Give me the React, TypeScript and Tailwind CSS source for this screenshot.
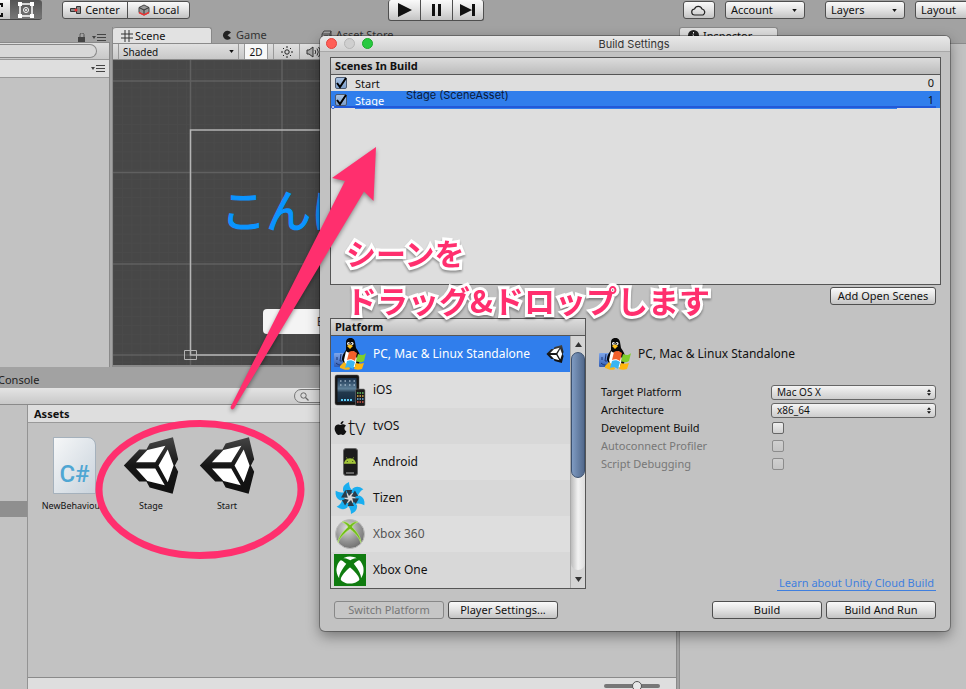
import React from "react";
import { FaAndroid, FaApple, FaXbox } from "react-icons/fa";

const buttonFace =
  "flex items-center rounded-[3px] border border-[#4f4f4f] bg-linear-to-b from-[#fafafa] via-[#e2e2e2] to-[#c4c4c4]";
const button = `${buttonFace} justify-center`;
const dropdown = `${buttonFace} justify-between pr-[7px] pl-[5px]`;
const tabStrip = "flex shrink-0 items-end";

function UnityIcon({ className }: { className: string }) {
  return (
    <svg viewBox="366 230 170 174" className={className} aria-hidden="true">
      <defs>
        <linearGradient id="unity-shade" x1="0" y1="0" x2="0" y2="1">
          <stop offset="0" stopColor="#454545" />
          <stop offset="0.5" stopColor="#161616" />
          <stop offset="1" stopColor="#111" />
        </linearGradient>
      </defs>
      <path
        fill="url(#unity-shade)"
        d="M368 317 415 268H437L447 250 518 231 534 298 524 317 534 336 517 403 447 384 437 366H415Z"
      />
      <path
        fill="#fff"
        d="M405 307 440 270 495 257 464 307ZM405 326H464L493 377 440 364ZM474 317 502 268 520 317 502 368Z"
      />
    </svg>
  );
}

function StandaloneIcon() {
  return (
    <svg viewBox="0 0 32 32" className="size-8 shrink-0" aria-hidden="true">
      <defs>
        <linearGradient id="finder" x1="0" y1="0" x2="0" y2="1">
          <stop offset="0" stopColor="#7fa6ea" />
          <stop offset="1" stopColor="#2f5cb4" />
        </linearGradient>
      </defs>
      <rect x="0" y="15" width="15" height="14" rx="1" fill="url(#finder)" />
      <path d="M3 19v3M11 19v3M7 16l-1 7h2M2 25c3 3 8 3 11 0" stroke="#1b3573" fill="none" />
      <path d="M12 4c0-5 8-6 9 0l1 6c3 4 5 8 4 13l-3 6H12L8 22c0-5 2-7 4-10Z" fill="#080808" />
      <path d="M12 13c2 2 6 2 8 0l3 8-2 8h-9l-2-7Z" fill="#fff" />
      <circle cx="14.500" cy="5.500" r="1.500" fill="#fff" />
      <circle cx="18" cy="5.500" r="1.500" fill="#fff" />
      <circle cx="15" cy="5.700" r=".7" />
      <circle cx="17.600" cy="5.700" r=".7" />
      <path d="M13 8c2-2 4-2 6 0l-3 3Z" fill="#ffc21c" />
      <path d="M6 28l4-4 5 4 1 3c-3 2-7 0-10-1Z" fill="#f6b51a" />
      <path d="M15 14c3-2 5-1 8 1l-2 8c-3-2-5-2-8-1Z" fill="#f2602b" />
      <path d="M24 16c3 1 5 2 8-1l-2 8c-3 2-6 1-8 0Z" fill="#7fce2a" />
      <path d="M13 23c3-1 5-1 8 1l-2 7c-3-2-5-2-8-1Z" fill="#39b5f2" />
      <path d="M22 25c3 1 5 1 8 0l-2 6c-3 1-5 1-8 0Z" fill="#ffb60d" />
    </svg>
  );
}

function IosIcon() {
  return (
    <svg viewBox="0 0 32 32" className="size-8 shrink-0" aria-hidden="true">
      <defs>
        <linearGradient id="wall" x1="0" y1="0" x2="0" y2="1">
          <stop offset="0" stopColor="#16304c" />
          <stop offset="0.45" stopColor="#5f8199" />
          <stop offset="0.6" stopColor="#22394d" />
          <stop offset="1" stopColor="#142b40" />
        </linearGradient>
      </defs>
      <rect x="1" y="1" width="24" height="30" rx="2" fill="#151515" stroke="#555" strokeWidth=".5" />
      <rect x="3.500" y="4" width="19" height="24" fill="url(#wall)" />
      <path d="M6 7h15M6 11h15" stroke="#c9dcea" strokeWidth="1.500" strokeDasharray="1.500 3" opacity=".7" />
      <path d="M7 26h12" stroke="#5ecbf3" strokeWidth="2" strokeDasharray="2 1" />
      <rect x="21.500" y="15" width="9.500" height="17" rx="1.500" fill="#1a1a1a" stroke="#777" strokeWidth=".6" />
      <path d="M23 19h7" stroke="#67c96a" strokeWidth="1.500" strokeDasharray="1.500 1" />
      <path d="M23 22h7" stroke="#e6b44b" strokeWidth="1.500" strokeDasharray="1.500 1" />
      <path d="M23 25h7" stroke="#71b6e8" strokeWidth="1.500" strokeDasharray="1.500 1" />
      <path d="M23 28h7" stroke="#d85c4e" strokeWidth="1.500" strokeDasharray="1.500 1" />
    </svg>
  );
}

function TvIcon() {
  return (
    <span className="flex size-8 shrink-0 items-center" aria-hidden="true">
      <FaApple className="mt-1 h-4 w-[13px] shrink-0" />
      <span className="ml-px font-['Open_Sans'] text-[22px] leading-7 font-light">tv</span>
    </span>
  );
}

function AndroidIcon() {
  return (
    <span className="flex size-8 shrink-0 items-center justify-center" aria-hidden="true">
      <span className="flex h-7 w-[15px] flex-col items-center rounded-[3px] border border-[#666] bg-[#1c1c1c] pt-[6px]">
        <FaAndroid className="size-3 text-[#a4c639]" />
        <span className="mt-[5px] h-[2px] w-2 bg-[#666]" />
      </span>
    </span>
  );
}

function TizenIcon() {
  return (
    <svg viewBox="-16 -16 32 32" className="size-8 shrink-0" aria-hidden="true">
      {[0, 60, 120, 180, 240, 300].map((angle) => (
        <g key={angle} transform={`rotate(${angle})`}>
          <path d="M-7-7Q-8-13-1-16Q-1-11 2-8L-4-4Z" fill="#19aef0" />
          <path d="M-4-8 5-8 2-5-1-2Z" fill="#2c3c49" />
        </g>
      ))}
    </svg>
  );
}

function Xbox360Icon() {
  return (
    <svg viewBox="0 0 32 32" className="size-8 shrink-0" aria-hidden="true">
      <defs>
        <radialGradient id="orb" cx=".4" cy=".3" r=".8">
          <stop offset="0" stopColor="#ddd" />
          <stop offset=".6" stopColor="#8f8f8f" />
          <stop offset="1" stopColor="#666" />
        </radialGradient>
      </defs>
      <circle cx="16" cy="16" r="14.500" fill="url(#orb)" stroke="#bbb" />
      <path d="M8 4c3-1 6 1 8 3 2-2 5-4 8-3-3 1-5 3-6 5 4 4 9 9 9 16-2-6-7-11-11-14C12 14 6 19 4 25c0-7 6-12 10-16-1-2-3-4-6-5Z" fill="#71bd19" stroke="#c5ee8c" strokeWidth=".6" />
    </svg>
  );
}

function XboxOneIcon() {
  return (
    <span className="flex size-8 shrink-0 items-center justify-center bg-[#107c10]" aria-hidden="true">
      <FaXbox className="size-7 text-white" />
    </span>
  );
}

const platforms = [
  { name: "PC, Mac & Linux Standalone", icon: <StandaloneIcon />, style: "bg-[#307eec] text-white" },
  { name: "iOS", icon: <IosIcon />, style: "bg-[#dedede]" },
  { name: "tvOS", icon: <TvIcon />, style: "bg-[#d8d8d8]" },
  { name: "Android", icon: <AndroidIcon />, style: "bg-[#dedede]" },
  { name: "Tizen", icon: <TizenIcon />, style: "bg-[#d8d8d8]" },
  { name: "Xbox 360", icon: <Xbox360Icon />, style: "bg-[#dedede] text-[#555]" },
  { name: "Xbox One", icon: <XboxOneIcon />, style: "bg-[#d8d8d8]" },
];

function MenuIcon() {
  return (
    <svg viewBox="0 0 14 9" className="h-[9px] w-[14px] shrink-0" aria-hidden="true">
      <path d="M0 3h4L2 6Z" fill="#444" />
      <path d="M5 1.500h9M5 4.500h9M5 7.500h9" stroke="#444" />
    </svg>
  );
}

function Caret() {
  return (
    <svg viewBox="0 0 6 4" className="h-[3px] w-[5px] shrink-0" aria-hidden="true">
      <path d="M0 0h6L3 4Z" fill="#111" />
    </svg>
  );
}

function Toolbar() {
  return (
    <header className="flex h-[27px] shrink-0 items-start">
      <button aria-label="Scale" className="flex h-5 w-[10px] items-center border-b border-[#444] bg-linear-to-b from-[#fafafa] to-[#c4c4c4]">
        <svg viewBox="0 0 5 16" className="h-4 w-[5px]" aria-hidden="true">
          <path d="M0 2h2v3M0 14h2v-3" stroke="#111" strokeWidth="2" fill="none" />
        </svg>
      </button>
      <button aria-label="Rect" aria-pressed="true" className="flex h-5 w-8 items-center justify-center rounded-r-[3px] border-b border-[#444] bg-linear-to-b from-[#555] to-[#777]">
        <svg viewBox="0 0 18 18" className="size-[18px]" aria-hidden="true">
          <path d="M3 3h12v12H3Z" fill="none" stroke="#fff" strokeWidth="1.500" />
          <path d="M1 1h4v4H1ZM13 1h4v4h-4ZM1 13h4v4H1ZM13 13h4v4h-4Z" fill="#fff" />
          <circle cx="9" cy="9" r="2.500" fill="none" stroke="#fff" />
          <circle cx="9" cy="9" r="1" fill="#fff" />
        </svg>
      </button>
      <div className="mt-px ml-5 flex h-[18px]">
        <button className={`${button} w-[66px] gap-[3px] rounded-r-none`}>
          <svg viewBox="0 0 12 8" className="h-2 w-3" aria-hidden="true">
            <path d="M.5 2.500h5v3h-5ZM6.500.5h4v7h-4Z" fill="#888" stroke="#333" />
            <circle cx="6" cy="4" r="1.500" fill="#e33" />
          </svg>
          Center
        </button>
        <button className={`${button} -ml-px w-[63px] gap-[3px] rounded-l-none`}>
          <svg viewBox="0 0 12 12" className="size-3" aria-hidden="true">
            <path d="M6 1 11 3.500v5L6 11 1 8.500v-5Z" fill="#999" stroke="#444" />
            <path d="M1 3.500 6 6l5-2.500M6 6v5" fill="none" stroke="#333" />
            <path d="M1 8.500 6 11l5-2.500" fill="none" stroke="#e33" strokeWidth="1.500" />
          </svg>
          Local
        </button>
      </div>
      <div className="ml-[198px] flex h-[21px]">
        <button aria-label="Play" className={`${button} w-[33px] rounded-r-none border-t-0`}>
          <svg viewBox="0 0 14 14" className="size-[14px]" aria-hidden="true">
            <path d="M0 0 14 7 0 14Z" fill="#111" />
          </svg>
        </button>
        <button aria-label="Pause" className={`${button} -ml-px w-[33px] rounded-none border-t-0`}>
          <svg viewBox="0 0 14 14" className="size-[14px]" aria-hidden="true">
            <path d="M2 1h3v12H2ZM8 1h3v12H8Z" fill="#111" />
          </svg>
        </button>
        <button aria-label="Step" className={`${button} -ml-px w-8 rounded-l-none border-t-0`}>
          <svg viewBox="0 0 16 14" className="h-[14px] w-4" aria-hidden="true">
            <path d="M0 1 12 7 0 13ZM12 1h3v12h-3Z" fill="#111" />
          </svg>
        </button>
      </div>
      <div className="mt-px -mr-[29px] ml-auto flex h-[18px]">
        <button aria-label="Cloud" className={`${button} w-8`}>
          <svg viewBox="0 0 16 11" className="h-[11px] w-4" aria-hidden="true">
            <path d="M4 10a3 3 0 0 1-.5-6A4 4 0 0 1 11 4a3.200 3.200 0 0 1 1 6Z" fill="none" stroke="#222" strokeWidth="1.200" />
          </svg>
        </button>
        <button className={`${dropdown} ml-[10px] w-20`}>Account <Caret /></button>
        <button className={`${dropdown} ml-5 w-20`}>Layers <Caret /></button>
        <button className={`${dropdown} ml-[10px] w-20`}>Layout <Caret /></button>
      </div>
    </header>
  );
}

function Hierarchy() {
  return (
    <section className="flex w-[110px] shrink-0 flex-col">
      <div className={`${tabStrip} h-[15px] justify-end gap-[6px] pr-1`}>
        <svg viewBox="0 0 8 9" className="h-[9px] w-2" aria-label="Lock">
          <path d="M0 4h7v5H0Z" fill="#444" />
          <path d="M2 4V2.500a1.800 1.800 0 0 1 4-1V4" fill="none" stroke="#555" />
        </svg>
        <MenuIcon />
      </div>
      <div className="flex min-h-0 flex-1 flex-col border-t border-r border-[#8a8a8a] bg-[#c2c2c2]">
        <div className="flex h-[17px] shrink-0 items-center border-b border-[#999] bg-linear-to-b from-[#dedede] to-[#c8c8c8] pr-3">
          <input aria-label="Search hierarchy" className="h-[14px] w-full rounded-r-full border border-l-0 border-[#888] bg-[#d8d8d8]" />
        </div>
        <div className="flex h-[18px] shrink-0 items-center justify-end border-b border-[#999] bg-[#dedede] pr-1">
          <MenuIcon />
        </div>
      </div>
    </section>
  );
}

function Scene() {
  return (
    <section className="ml-[2px] flex min-w-0 flex-1 flex-col border-l border-[#8a8a8a]">
      <div className={`${tabStrip} h-4 items-stretch`}>
        <div className="flex w-[99px] items-center gap-[2px] rounded-t-[3px] border-t border-r border-[#888] bg-[#e2e2e2] pl-2">
          <svg viewBox="0 0 12 12" className="size-3" aria-hidden="true">
            <path d="M4 0v12M8 0v12M0 4h12M0 8h12" stroke="#333" />
          </svg>
          Scene
        </div>
        <div className="flex items-center gap-1 pl-[10px] text-[#333]">
          <svg viewBox="0 0 10 10" className="size-[10px]" aria-hidden="true">
            <path d="M9 2.500A4.500 4.500 0 1 0 9 8L5.500 5.200Z" fill="#222" />
          </svg>
          Game
        </div>
        <div className="flex items-center gap-1 pl-[54px] text-[#333]">
          <svg viewBox="0 0 11 11" className="size-[11px]" aria-hidden="true">
            <path d="M1 4h8v6H1ZM1 4l2-3h7L9 4M10 1v6L9 10M3 6h4" fill="none" stroke="#444" />
          </svg>
          Asset Store
        </div>
      </div>
      <div className="flex h-[17px] shrink-0 items-stretch border-t border-b border-[#8a8a8a] bg-linear-to-b from-[#e0e0e0] to-[#c8c8c8] pl-[5px] text-[10px]">
        <button className="flex w-[121px] items-center justify-between border-x border-[#999] pr-1 pl-1">
          Shaded <Caret />
        </button>
        <button className="ml-[5px] w-6 border-x border-[#999] bg-[#f8f8f8]">2D</button>
        <button aria-label="Lighting" className="ml-[5px] flex w-[27px] items-center justify-center border-x border-[#999]">
          <svg viewBox="0 0 12 12" className="size-3" aria-hidden="true">
            <circle cx="6" cy="6" r="2.200" fill="none" stroke="#222" />
            <path d="M6 0v2M6 10v2M0 6h2M10 6h2M2 2l1 1M9 9l1 1M10 2 9 3M3 9l-1 1" stroke="#222" />
          </svg>
        </button>
        <button aria-label="Audio" className="flex w-[26px] items-center justify-center">
          <svg viewBox="0 0 14 12" className="h-3 w-[14px]" aria-hidden="true">
            <path d="M1 4h2l4-3v10L3 8H1Z" fill="#aaa" stroke="#333" />
            <path d="M9 4q1.500 2 0 4M11 2.500q2.500 3.500 0 7M12.500 1q3.500 5 0 10" fill="none" stroke="#333" />
          </svg>
        </button>
      </div>
      <div className="relative min-h-0 flex-1 overflow-hidden border-b-2 border-[#8a8a8a] bg-[#474747]">
        <svg className="absolute inset-0 size-full" aria-hidden="true">
          <defs>
            <pattern id="fine-grid" width="9.140" height="9.140" patternUnits="userSpaceOnUse">
              <path d="M0 .5H10M.5 0V10" stroke="#4a4a4a" fill="none" />
            </pattern>
          </defs>
          <rect width="100%" height="100%" fill="url(#fine-grid)" />
          <path d="M77.500 0V400M169 0V400M0 21H600M0 112.500H600M0 204H600M0 295H600" stroke="#606060" strokeWidth="1.500" />
          <path d="M600 70H77.500V295H600" stroke="#b4b4b4" strokeWidth="1.500" fill="none" />
          <path d="M71.500 290.500h12v9h-12Z" stroke="#b4b4b4" fill="none" />
        </svg>
        <p className="absolute top-[116px] left-[108px] font-['Noto_Sans_CJK_JP',sans-serif] text-[45px] leading-[66px] whitespace-nowrap text-[#0a94ff] [-webkit-text-stroke:1px_#0a94ff]">こんにちは</p>
        <button className="absolute top-[249px] left-[150px] h-[25px] w-[146px] rounded-[4px] bg-[#f4f4f4] text-[12px] text-[#333]">Button</button>
      </div>
    </section>
  );
}

function Project() {
  return (
    <section className="flex min-h-0 flex-[322] flex-col">
      <div className="flex h-[21px] shrink-0 items-end">
        <span className="-ml-[2px] text-[#222]">Console</span>
      </div>
      <div className="flex h-[17px] shrink-0 items-center border-b border-[#8a8a8a] bg-linear-to-b from-[#e4e4e4] to-[#c8c8c8] pl-[294px]">
        <label className="flex h-[14px] w-[300px] items-center rounded-full border border-[#777] bg-[#d8d8d8] pl-[5px]">
          <svg viewBox="0 0 9 9" className="size-[9px]" aria-hidden="true">
            <circle cx="3.500" cy="3.500" r="2.700" fill="none" stroke="#666" />
            <path d="m5.500 5.500 3 3" stroke="#666" strokeWidth="1.300" />
          </svg>
          <input aria-label="Search assets" className="min-w-0 flex-1 text-[10px]" />
        </label>
      </div>
      <div className="flex min-h-0 flex-1 border-r border-[#8a8a8a] bg-[#c2c2c2]">
        <div className="w-7 shrink-0 border-r border-[#939393] pt-24">
          <div className="h-4 bg-[#8f8f8f]" />
        </div>
        <div className="flex min-w-0 flex-1 flex-col">
          <h2 className="flex h-[18px] shrink-0 items-center border-b border-[#999] bg-[#dedede] pt-px pl-[6px] font-bold">Assets</h2>
          <div className="flex flex-1 items-start pt-[14px] pl-2 text-[10px]">
            <figure className="flex w-[77px] flex-col items-center">
              <div className="flex h-[57px] w-[43px] items-end justify-center rounded-tr-lg border border-[#a5b1bc] bg-linear-to-br from-[#f6f7f8] to-[#c9d3dc] pb-[3px] text-[#4fa6d3]">
                <span className="font-['Roboto'] text-[24px] leading-8 font-medium">C#</span>
              </div>
              <figcaption className="mt-[5px] text-[9px] leading-[14px]">NewBehaviou...</figcaption>
            </figure>
            {["Stage", "Start"].map((name) => (
              <figure key={name} className="flex w-[76px] flex-col items-center">
                <UnityIcon className="h-[57px] w-14" />
                <figcaption className="mt-[5px] text-[9px] leading-[14px]">{name}</figcaption>
              </figure>
            ))}
          </div>
          <div className="flex h-3 shrink-0 items-start justify-end border-t border-[#8a8a8a] bg-[#dedede] pr-4">
            <input
              type="range"
              aria-label="Icon size"
              defaultValue={60}
              className="mt-[3px] h-[10px] w-[56px] appearance-none bg-transparent [&::-webkit-slider-runnable-track]:h-1 [&::-webkit-slider-runnable-track]:rounded-full [&::-webkit-slider-runnable-track]:bg-[#777] [&::-webkit-slider-thumb]:-mt-[3px] [&::-webkit-slider-thumb]:size-[10px] [&::-webkit-slider-thumb]:appearance-none [&::-webkit-slider-thumb]:rounded-full [&::-webkit-slider-thumb]:border [&::-webkit-slider-thumb]:border-[#555] [&::-webkit-slider-thumb]:bg-[#e8e8e8]"
            />
          </div>
        </div>
      </div>
    </section>
  );
}

function Inspector() {
  return (
    <aside className="ml-[2px] flex w-[287px] shrink-0 flex-col">
      <div className={`${tabStrip} h-4 items-stretch`}>
        <div className="flex w-[99px] items-center gap-1 rounded-t-[3px] border border-b-0 border-[#888] bg-[#dedede] pl-2">
          <svg viewBox="0 0 11 11" className="size-[11px]" aria-hidden="true">
            <circle cx="5.500" cy="5.500" r="5.500" fill="#222" />
            <path d="M5.500 2v1.500M4.500 5h1v3.500M4 8.500h3" stroke="#fff" fill="none" />
          </svg>
          Inspector
        </div>
      </div>
      <div className="flex-1 border-t border-l border-[#8a8a8a] bg-[#c2c2c2]" />
    </aside>
  );
}

function SceneRow({ name, index, selected }: { name: string; index: number; selected?: boolean }) {
  return (
    <li className={selected ? "bg-[#307eec]" : ""}>
      <label className={`flex items-center pr-[6px] pl-1 ${selected ? "h-[17px]" : "h-4"}`}>
        <span className="grid size-3 shrink-0">
          <input type="checkbox" defaultChecked className="col-start-1 row-start-1 size-3 appearance-none rounded-[2px] border border-[#4c5a70] bg-linear-to-b from-[#a9c2e2] to-[#7b9ecb]" />
          <svg viewBox="0 0 12 12" className="pointer-events-none col-start-1 row-start-1 size-3" aria-hidden="true">
            <path d="m2 6 3 4 6-9" fill="none" stroke="#000" strokeWidth="2" />
          </svg>
        </span>
        <span className={`ml-2 flex-1 pt-[2px] ${selected ? "text-white" : ""}`}>{name}</span>
        <span>{index}</span>
      </label>
    </li>
  );
}

function Popup({ id, label, value, other }: { id: string; label: string; value: string; other: string }) {
  return (
    <div className="flex h-[18px] items-center">
      <label htmlFor={id} className="w-[170px] shrink-0">{label}</label>
      <div className="grid flex-1 items-center">
        <select id={id} defaultValue={value} className="col-start-1 row-start-1 h-[15px] w-full appearance-none rounded-[3px] border border-[#666] bg-linear-to-b from-[#f4f4f4] to-[#cdcdcd] pl-[5px] text-[10px] leading-3">
          <option>{value}</option>
          <option>{other}</option>
        </select>
        <svg viewBox="0 0 5 8" className="pointer-events-none col-start-1 row-start-1 mr-[5px] h-[7px] w-1 justify-self-end" aria-hidden="true">
          <path d="M0 3h5L2.500 0ZM0 5h5L2.500 8Z" fill="#111" />
        </svg>
      </div>
    </div>
  );
}

function Toggle({ id, label, disabled }: { id: string; label: string; disabled?: boolean }) {
  return (
    <div className="flex h-[18px] items-center">
      <label htmlFor={id} className={`w-[171px] shrink-0 ${disabled ? "text-[#777]" : ""}`}>{label}</label>
      <input
        id={id}
        type="checkbox"
        disabled={disabled}
        className="size-3 appearance-none rounded-[2px] border border-[#666] bg-linear-to-b from-[#eee] to-[#d0d0d0] disabled:border-[#8c8c8c] disabled:from-[#d0d0d0] disabled:to-[#c4c4c4]"
      />
    </div>
  );
}

function BuildSettings() {
  return (
    <div
      role="dialog"
      aria-labelledby="dialog-title"
      className="absolute top-9 left-80 flex w-[630px] flex-col overflow-hidden rounded-[5px] bg-[#c2c2c2] shadow-[0_5px_14px_rgba(0,0,0,0.4),0_0_0_1px_rgba(0,0,0,0.3)]"
    >
      <div className="flex h-4 items-center border-b border-[#a8a8a8] bg-linear-to-b from-[#e8e8e8] to-[#d2d2d2]">
        <div className="flex w-[60px] gap-[7px] pl-[6px]">
          <button aria-label="Close" className="size-[11px] rounded-full border border-[#e0443e] bg-[#ff5f57]" />
          <button aria-label="Minimize" className="size-[11px] rounded-full border border-[#b5b5b5] bg-[#cfcfcf]" />
          <button aria-label="Zoom" className="size-[11px] rounded-full border border-[#1aab29] bg-[#28c940]" />
        </div>
        <h1 id="dialog-title" className="flex-1 pr-[62px] text-center font-['Inter',sans-serif] text-[11px] text-[#333]">Build Settings</h1>
      </div>
      <div className="flex flex-col pt-[5px] pr-[9px] pb-3 pl-[10px]">
        <section className="relative h-[228px] border border-[#555] bg-[#dedede]">
          <h2 className="flex h-[17px] items-center border-b border-[#555] bg-linear-to-b from-[#dcdcdc] to-[#bcbcbc] pl-1 font-bold">Scenes In Build</h2>
          <ul>
            <SceneRow name="Start" index={0} />
            <SceneRow name="Stage" index={1} selected />
          </ul>
          <div className="absolute top-[48px] right-1 left-[2px] h-[2px] bg-[#2259d8]" />
          <div className="absolute top-[50px] right-[43px] left-6 h-px bg-[#307eec]" />
          <div className="absolute top-[47px] left-0 size-1 rounded-full border border-[#2259d8] bg-white" />
          <p className="absolute top-[30px] left-[75px] font-['Inter',sans-serif] text-[11px] leading-[14px] text-[#0a1a38]">Stage (SceneAsset)</p>
        </section>
        <button className={`${button} mt-[2px] mr-[5px] h-[18px] w-[106px] self-end`}>Add Open Scenes</button>
        <div className="mt-[13px] flex">
          <section className="w-64 shrink-0 border border-[#555]">
            <h2 className="flex h-[17px] items-center border-b border-[#555] bg-linear-to-b from-[#dcdcdc] to-[#bcbcbc] pl-1 font-bold">Platform</h2>
            <div className="flex">
              <ul className="min-w-0 flex-1">
                {platforms.map((platform, i) => (
                  <li key={platform.name} className={`flex h-9 items-center pr-[6px] pl-[3px] text-[12px] ${platform.style}`}>
                    {platform.icon}
                    <span className="ml-[7px] flex-1 whitespace-nowrap">{platform.name}</span>
                    {i === 0 && <UnityIcon className="size-[18px]" />}
                  </li>
                ))}
              </ul>
              <div className="flex w-[15px] shrink-0 flex-col items-center border-l border-[#aaa] bg-[#d4d4d4]">
                <span className="flex h-4 items-center"><svg viewBox="0 0 7 5" className="h-[5px] w-[7px]" aria-label="Scroll up"><path d="M0 5h7L3.500 0Z" fill="#333" /></svg></span>
                <div className="flex w-full flex-1 flex-col rounded-full bg-linear-to-r from-[#bbb] via-[#f2f2f2] to-[#ddd]">
                  <div className="h-[126px] w-full rounded-full border border-[#3c516f] bg-linear-to-r from-[#7f9bc2] to-[#52698c]" />
                </div>
                <span className="flex h-[18px] items-center"><svg viewBox="0 0 7 5" className="h-[5px] w-[7px]" aria-label="Scroll down"><path d="M0 0h7L3.500 5Z" fill="#333" /></svg></span>
              </div>
            </div>
          </section>
          <section className="flex flex-1 flex-col pt-[18px] pr-[5px] pl-[13px]">
            <h2 className="flex h-9 items-center gap-[7px] text-[12px]">
              <StandaloneIcon />
              PC, Mac &amp; Linux Standalone
            </h2>
            <div className="mt-[11px] pl-[2px]">
              <Popup id="target" label="Target Platform" value="Mac OS X" other="Windows" />
              <Popup id="arch" label="Architecture" value="x86_64" other="x86" />
              <Toggle id="dev" label="Development Build" />
              <Toggle id="profiler" label="Autoconnect Profiler" disabled />
              <Toggle id="debug" label="Script Debugging" disabled />
            </div>
            <a href="#cloud-build" className="mt-auto -mb-[2px] self-end border-b border-[#3f7fdf] px-[2px] leading-[14px] text-[#3f7fdf]">Learn about Unity Cloud Build</a>
          </section>
        </div>
        <div className="mt-3 flex gap-1 pr-[5px] pl-1">
          <button disabled className="h-[18px] w-[110px] rounded-[3px] border border-[#888] bg-[#c6c6c6] text-[#777]">Switch Platform</button>
          <button className={`${button} h-[18px] w-[110px]`}>Player Settings...</button>
          <button className={`${button} ml-auto h-[18px] w-[110px]`}>Build</button>
          <button className={`${button} h-[18px] w-[110px]`}>Build And Run</button>
        </div>
      </div>
    </div>
  );
}

function Annotations() {
  return (
    <div className="pointer-events-none absolute inset-0">
      <svg viewBox="0 0 966 689" className="absolute top-0 left-0 h-[689px] w-[966px] drop-shadow-[0_2px_2px_rgba(0,0,0,0.4)]" aria-hidden="true">
        <path d="M376 147 332 178 345 181 230.500 407Q231 411 234 408.500L364 191.500 373.500 201Z" fill="#ff2f6e" />
      </svg>
      <svg viewBox="0 0 966 689" className="absolute top-0 left-0 h-[689px] w-[966px]" aria-hidden="true">
        <ellipse cx="200" cy="489.500" rx="101" ry="66" fill="none" stroke="#ff2f6e" strokeWidth="7" />
      </svg>
      <div className="absolute top-[228px] left-[346px] font-['Noto_Sans_CJK_JP',sans-serif] leading-[48px] font-bold whitespace-nowrap text-[#ff2f6e] drop-shadow-[0_2px_1px_rgba(0,0,0,0.35)] [-webkit-text-stroke:6px_white] [paint-order:stroke]">
        <p className="text-[30px]">シーンを</p>
        <p className="text-[31px]">ドラッグ&amp;ドロップします</p>
      </div>
    </div>
  );
}

export default function App() {
  return (
    <div className="relative flex h-screen flex-col overflow-hidden bg-[#a2a2a2] font-['Noto_Sans','Noto_Sans_CJK_JP',sans-serif] text-[11px] leading-4 text-[#111]">
      <Toolbar />
      <div className="flex min-h-0 flex-1">
        <main className="flex min-w-0 flex-1 flex-col">
          <div className="flex min-h-0 flex-[340]">
            <Hierarchy />
            <Scene />
          </div>
          <Project />
        </main>
        <Inspector />
      </div>
      <BuildSettings />
      <Annotations />
    </div>
  );
}
